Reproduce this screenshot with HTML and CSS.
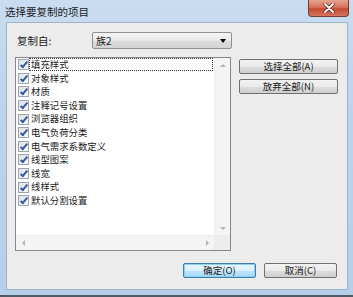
FILE: index.html
```html
<!DOCTYPE html>
<html lang="zh">
<head>
    <meta charset="UTF-8">
    <title>选择要复制的项目</title>
    <link rel="stylesheet" href="styles.css">
</head>
<body>

<div class="window">
    <div class="titlebar">
        <span class="title">选择要复制的项目</span>
        <div class="close-btn">
            <svg width="14" height="10" viewBox="0 0 14 10">
                <path d="M3 1 L11 9 M11 1 L3 9" stroke="#5a2a22" stroke-width="3.2" stroke-linecap="round"/>
                <path d="M3 1 L11 9 M11 1 L3 9" stroke="#ffffff" stroke-width="1.8" stroke-linecap="round"/>
            </svg>
        </div>
    </div>

    <div class="client">
        <div class="source-row">
            <span class="label">复制自:</span>
            <div class="combo">
                <span>族2</span>
                <span class="arrow"></span>
            </div>
        </div>

        <div class="main">
            <div class="listbox">
                <div class="list-area">
                    <div class="items">
                        <div class="item focused"><i class="check"></i><span>填充样式</span></div>
                        <div class="item"><i class="check"></i><span>对象样式</span></div>
                        <div class="item"><i class="check"></i><span>材质</span></div>
                        <div class="item"><i class="check"></i><span>注释记号设置</span></div>
                        <div class="item"><i class="check"></i><span>浏览器组织</span></div>
                        <div class="item"><i class="check"></i><span>电气负荷分类</span></div>
                        <div class="item"><i class="check"></i><span>电气需求系数定义</span></div>
                        <div class="item"><i class="check"></i><span>线型图案</span></div>
                        <div class="item"><i class="check"></i><span>线宽</span></div>
                        <div class="item"><i class="check"></i><span>线样式</span></div>
                        <div class="item"><i class="check"></i><span>默认分割设置</span></div>
                    </div>
                    <div class="vscroll">
                        <span class="tri up"></span>
                        <span class="tri down"></span>
                    </div>
                </div>
                <div class="hscroll">
                    <div class="hbar">
                        <span class="tri left"></span>
                        <span class="tri right"></span>
                    </div>
                    <div class="corner"></div>
                </div>
            </div>

            <div class="side-buttons">
                <div class="btn">选择全部(A)</div>
                <div class="btn">放弃全部(N)</div>
            </div>
        </div>

        <div class="footer">
            <div class="btn small default">确定(O)</div>
            <div class="btn small">取消(C)</div>
        </div>
    </div>
</div>

</body>
</html>
```

FILE: styles.css
```css
body {
    margin: 0;
    padding: 0;
    font-family: "Noto Sans CJK SC", "DejaVu Sans", sans-serif;
    font-size: 11px;
    color: #1a1a1a;
    background: #ffffff;
}

.window {
    width: 353px;
    height: 297px;
    box-sizing: border-box;
    background: linear-gradient(180deg, #c9dcf1 0%, #bcd3ec 40%, #b6cfe9 100%);
    border-bottom: 2px solid #4f5a66;
    display: flex;
    flex-direction: column;
}

.titlebar {
    height: 22px;
    display: flex;
    align-items: flex-start;
    justify-content: space-between;
}

.title {
    margin: 4px 0 0 5px;
    font-size: 10.5px;
    line-height: 15px;
    color: #1b1b1b;
}

.close-btn {
    width: 41px;
    height: 17px;
    margin-right: 4px;
    box-sizing: border-box;
    border: 1px solid #7a3a30;
    border-top: none;
    border-radius: 0 0 4px 4px;
    background: linear-gradient(180deg, #e8a493 0%, #d9705c 45%, #c34a32 55%, #d8765d 100%);
    display: flex;
    align-items: center;
    justify-content: center;
}

.client {
    margin: 0 5px 5px 6px;
    flex: 1;
    background: #ececec;
    border: 1px solid #9fb3c9;
    box-sizing: border-box;
    padding: 9px 9px 0 8px;
    display: flex;
    flex-direction: column;
}

.source-row {
    display: flex;
    align-items: center;
    height: 17px;
}

.label {
    width: 75px;
    margin-left: 2px;
    font-size: 10.5px;
}

.combo {
    width: 140px;
    height: 17px;
    box-sizing: border-box;
    border: 1px solid #8e8f8f;
    border-radius: 2px;
    background: linear-gradient(180deg, #f6f6f6 0%, #e9e9e9 50%, #dcdcdc 51%, #d4d4d4 100%);
    display: flex;
    align-items: center;
    justify-content: space-between;
    padding: 0 5px 0 3px;
    font-size: 10px;
}

.arrow {
    width: 0;
    height: 0;
    border-left: 3.5px solid transparent;
    border-right: 3.5px solid transparent;
    border-top: 4px solid #000;
}

.main {
    display: flex;
    margin-top: 8px;
}

.listbox {
    width: 216px;
    height: 194px;
    box-sizing: border-box;
    border: 1px solid #828790;
    background: #fff;
    display: flex;
    flex-direction: column;
}

.list-area {
    flex: 1;
    display: flex;
}

.items {
    flex: 1;
}

.item {
    height: 13.6px;
    display: flex;
    align-items: center;
    padding-left: 2px;
    font-size: 9.4px;
    line-height: 13.6px;
}

.item span {
    flex: 1;
    padding-left: 2px;
    height: 13px;
    display: flex;
    align-items: center;
}

.item.focused span {
    outline: 1px dotted #333;
    outline-offset: -1px;
    margin-right: 1px;
}

.check {
    width: 11px;
    height: 11px;
    box-sizing: border-box;
    border: 1px solid #9ea4b0;
    background: linear-gradient(135deg, #dfe2e8, #f7f8fa);
    position: relative;
    flex: none;
}

.check::after {
    content: "";
    position: absolute;
    left: 3px;
    top: 0px;
    width: 2px;
    height: 6px;
    border-right: 2px solid #3559a0;
    border-bottom: 2px solid #3559a0;
    transform: rotate(40deg);
}

.vscroll {
    width: 15px;
    background: #f4f4f4;
    border-left: 1px solid #ececec;
    display: flex;
    flex-direction: column;
    justify-content: space-between;
    align-items: center;
    padding: 6px 0 5px;
}

.hscroll {
    height: 15px;
    display: flex;
}

.hbar {
    flex: 1;
    background: #f4f4f4;
    border-top: 1px solid #ececec;
    display: flex;
    align-items: center;
    justify-content: space-between;
    padding: 0 5px 0 6px;
}

.corner {
    width: 16px;
    background: #ececec;
}

.tri {
    width: 0;
    height: 0;
}

.tri.up {
    border-left: 3px solid transparent;
    border-right: 3px solid transparent;
    border-bottom: 3px solid #b4b4b4;
}

.tri.down {
    border-left: 3px solid transparent;
    border-right: 3px solid transparent;
    border-top: 3px solid #b4b4b4;
}

.tri.left {
    border-top: 3px solid transparent;
    border-bottom: 3px solid transparent;
    border-right: 3px solid #b4b4b4;
}

.tri.right {
    border-top: 3px solid transparent;
    border-bottom: 3px solid transparent;
    border-left: 3px solid #b4b4b4;
}

.side-buttons {
    display: flex;
    flex-direction: column;
    gap: 5px;
    margin: 2px 0 0 8px;
}

.btn {
    width: 99px;
    height: 15px;
    box-sizing: border-box;
    border: 1px solid #707070;
    border-radius: 2px;
    background: linear-gradient(180deg, #f2f2f2 0%, #ebebeb 50%, #dddddd 51%, #cfcfcf 100%);
    display: flex;
    align-items: center;
    justify-content: center;
    font-size: 9.5px;
    line-height: 13px;
}

.footer {
    display: flex;
    justify-content: flex-end;
    gap: 8px;
    margin-top: 12px;
    padding-right: 1px;
}

.btn.small {
    width: 73px;
}

.btn.default {
    border-color: #3c7fb1;
    background: linear-gradient(180deg, #eaf6fd 0%, #d9f0fc 50%, #bee6fd 51%, #a7d9f5 100%);
    box-shadow: inset 0 0 0 1px #8fd0f2;
}
```
